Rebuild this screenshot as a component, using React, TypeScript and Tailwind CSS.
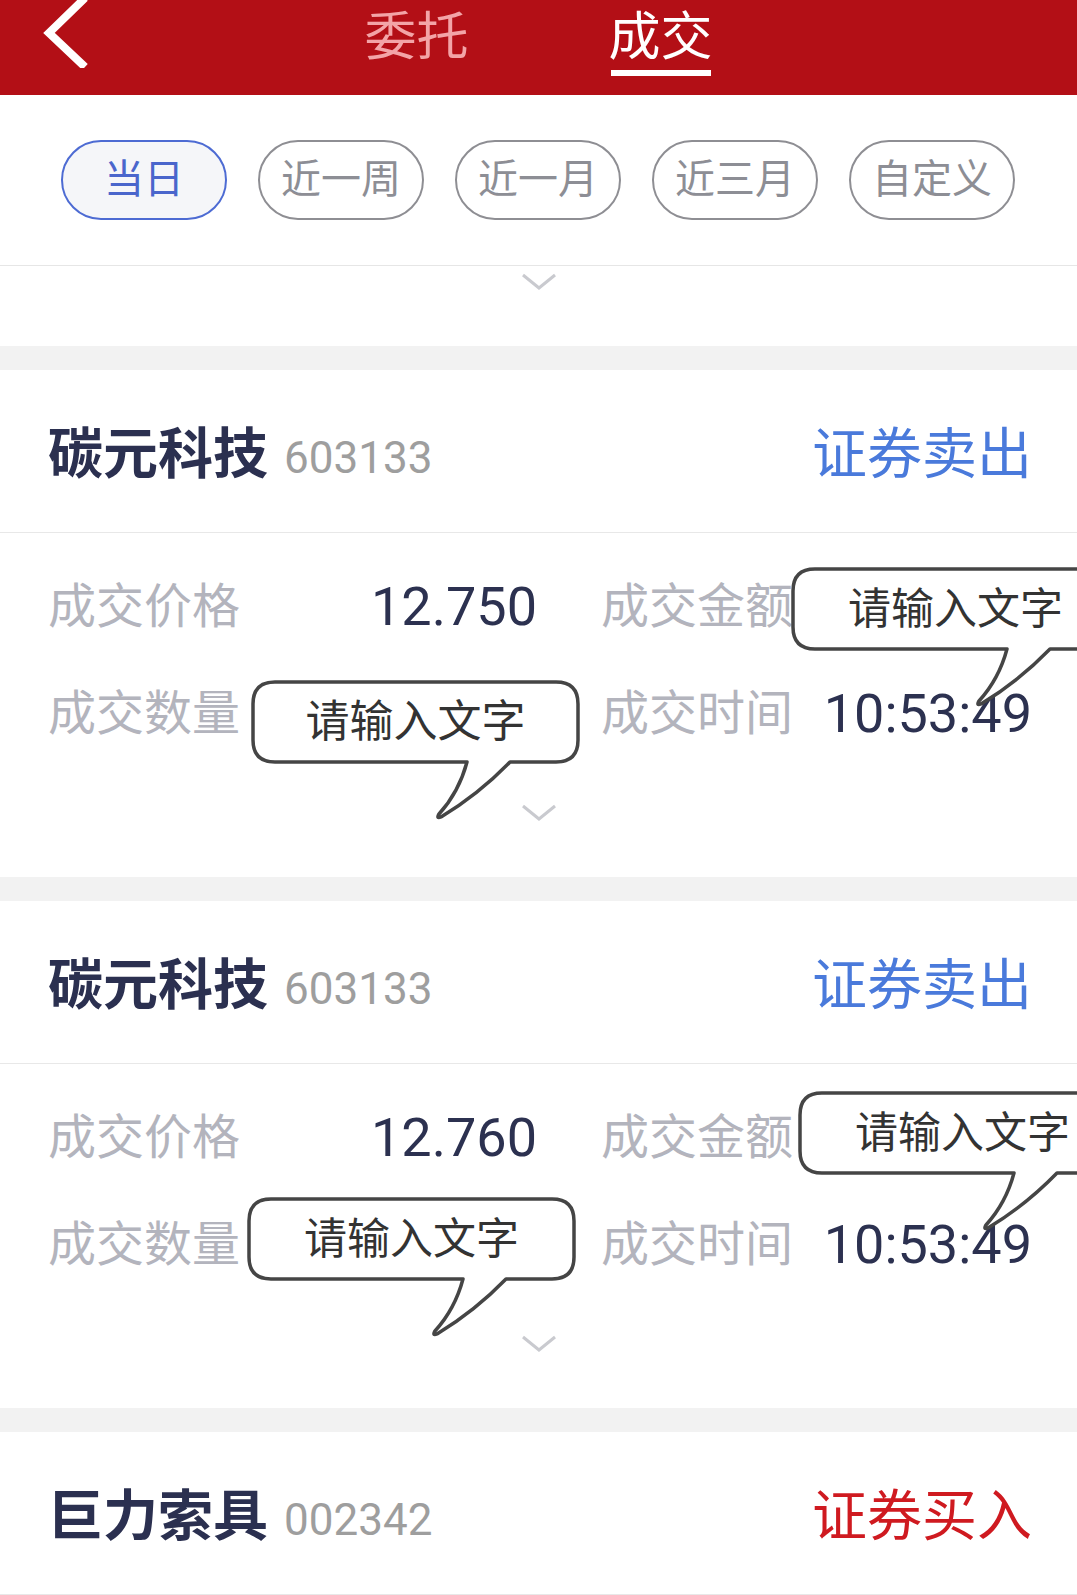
import React from 'react';

const periods = ['当日', '近一周', '近一月', '近三月', '自定义'];

function DownChevron() {
  return (
    <svg width="36" height="18" viewBox="0 0 36 18">
      <polyline points="2,2 18,15 34,2" fill="none" stroke="#c9cacf" strokeWidth="3" />
    </svg>
  );
}

// annotation bubble drawn over the card
function Bubble({ className, textClass }: { className: string; textClass: string }) {
  return (
    <div className={`absolute w-[325px] h-[80px] ${className}`}>
      <svg
        className="absolute left-[-3px] top-[-3px] overflow-visible"
        width="331"
        height="146"
        viewBox="-3 -3 331 146"
      >
        <path
          d="M22,0 H303 Q325,0 325,22 V58 Q325,80 303,80 H257 Q226,112 188,135 Q183,137 186,132 Q206,110 214,80 H22 Q0,80 0,58 V22 Q0,0 22,0 Z"
          fill="#ffffff"
          stroke="#454545"
          strokeWidth="3.5"
          strokeLinejoin="round"
        />
      </svg>
      <div className="relative flex h-full items-center justify-center">
        <span className={`leading-none text-[#333333] ${textClass}`}>请输入文字</span>
      </div>
    </div>
  );
}

function Row({
  leftLabel,
  leftValue,
  rightLabel,
  rightValue,
}: {
  leftLabel: string;
  leftValue: string;
  rightLabel: string;
  rightValue: string;
}) {
  return (
    <div className="flex h-[60px] items-center pl-[48px] pr-[45px]">
      <div className="flex w-[489px] items-center justify-between">
        <span className="text-[48px] leading-none text-[#b3b4bd]">{leftLabel}</span>
        <span className="text-[54px] leading-none text-[#2c3150]">{leftValue}</span>
      </div>
      <div className="ml-[64px] flex flex-1 items-center justify-between">
        <span className="text-[48px] leading-none text-[#b3b4bd]">{rightLabel}</span>
        <span className="text-[54px] leading-none text-[#2c3150]">{rightValue}</span>
      </div>
    </div>
  );
}

function TradeCard({
  name,
  code,
  action,
  buy,
  price,
  time,
  bubbles,
}: {
  name: string;
  code: string;
  action: string;
  buy?: boolean;
  price?: string;
  time?: string;
  bubbles?: React.ReactNode;
}) {
  return (
    <div className="bg-white">
      <div className="flex h-[163px] items-center justify-between border-b border-[#e8e8e8] pl-[48px] pr-[45px] pt-[6px]">
        <div className="flex items-baseline">
          <span className="text-[55px] font-bold leading-none text-[#2b3050]">{name}</span>
          <span className="ml-[16px] text-[44px] leading-none text-[#9e9e9e]">{code}</span>
        </div>
        <span className={`text-[55px] leading-none ${buy ? 'text-[#cf1a20]' : 'text-[#4a7adb]'}`}>
          {action}
        </span>
      </div>
      {price && time && (
        <div className="relative flex h-[344px] flex-col pt-[44px]">
          <Row leftLabel="成交价格" leftValue={price} rightLabel="成交金额" rightValue="" />
          <div className="mt-[47px]">
            <Row leftLabel="成交数量" leftValue="" rightLabel="成交时间" rightValue={time} />
          </div>
          <div className="mt-[60px] flex justify-center">
            <DownChevron />
          </div>
          {bubbles}
        </div>
      )}
    </div>
  );
}

export default function App() {
  return (
    <div className="relative w-full overflow-hidden bg-[#f2f2f2] font-['Roboto','Noto_Sans_CJK_SC',sans-serif]">
      {/* Header */}
      <div className="grid h-[95px] grid-cols-[1fr_auto_1fr] bg-[#b30f16]">
        <div className="pl-[43px]">
          <svg width="48" height="72" viewBox="0 0 48 72" className="-mt-[4px]">
            <polyline points="42,2 6,37 42,71" fill="none" stroke="#ffffff" strokeWidth="8" />
          </svg>
        </div>
        <div className="flex gap-[140px] pt-[12px]">
          <div className="flex flex-col items-center">
            <span className="text-[52px] leading-none text-[#f3a4a7]">委托</span>
          </div>
          <div className="flex flex-col items-center">
            <span className="text-[52px] leading-none text-white">成交</span>
            <div className="mt-[6px] h-[6px] w-[100px] bg-white" />
          </div>
        </div>
        <div />
      </div>

      {/* Period filter */}
      <div className="bg-white">
        <div className="flex h-[171px] items-center gap-[31px] border-b border-[#e6e6e6] pl-[61px]">
          {periods.map((p, i) => (
            <div
              key={p}
              className={`flex h-[80px] w-[166px] items-center justify-center rounded-full border-2 text-[40px] leading-none ${
                i === 0
                  ? 'border-[#4d6bd3] bg-[#f5f6f9] text-[#4a66cc]'
                  : 'border-[#8e8e93] bg-white text-[#8d8e95]'
              }`}
            >
              {p}
            </div>
          ))}
        </div>
        <div className="flex h-[80px] justify-center pt-[7px]">
          <DownChevron />
        </div>
      </div>

      <div className="mt-[24px]">
        <TradeCard
          name="碳元科技"
          code="603133"
          action="证券卖出"
          price="12.750"
          time="10:53:49"
          bubbles={
            <>
              <Bubble className="left-[793px] top-[36px]" textClass="text-[43px]" />
              <Bubble className="left-[253px] top-[149px]" textClass="text-[44px]" />
            </>
          }
        />
      </div>

      <div className="mt-[24px]">
        <TradeCard
          name="碳元科技"
          code="603133"
          action="证券卖出"
          price="12.760"
          time="10:53:49"
          bubbles={
            <>
              <Bubble className="left-[800px] top-[29px]" textClass="text-[43px]" />
              <Bubble className="left-[249px] top-[135px]" textClass="text-[43px]" />
            </>
          }
        />
      </div>

      <div className="mt-[24px]">
        <TradeCard name="巨力索具" code="002342" action="证券买入" buy />
      </div>
    </div>
  );
}
